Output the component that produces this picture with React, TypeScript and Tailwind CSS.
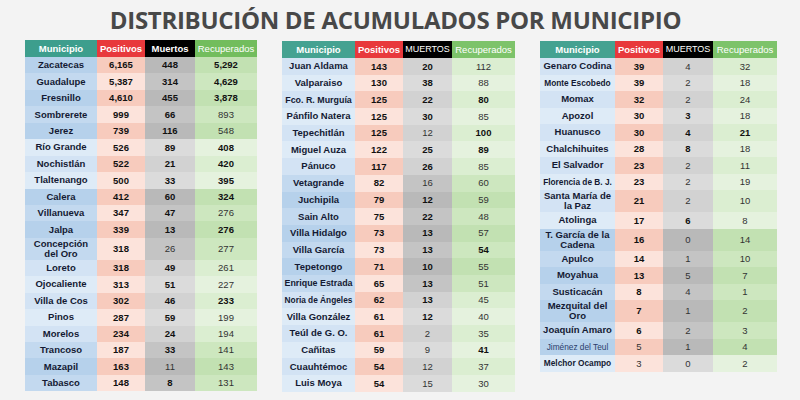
import React from 'react';

type Row = {
  name: string;
  pos: string;
  m: string;
  r: string;
  b: string; // bold mask for pos / muertos / recuperados
  dark: boolean;
  size?: 'sm' | 'md';
  thin?: boolean;
  tall?: boolean;
};

const r = (name: string, pos: string, m: string, rec: string, b: string, dark: boolean, extra: Partial<Row> = {}): Row => ({
  name, pos, m, r: rec, b, dark, ...extra,
});

const left: Row[] = [
  r('Zacatecas', '6,165', '448', '5,292', 'bbb', true),
  r('Guadalupe', '5,387', '314', '4,629', 'bbb', true),
  r('Fresnillo', '4,610', '455', '3,878', 'bbb', true),
  r('Sombrerete', '999', '66', '893', 'bbr', true),
  r('Jerez', '739', '116', '548', 'bbr', true),
  r('Río Grande', '526', '89', '408', 'bbb', false),
  r('Nochistlán', '522', '21', '420', 'bbb', false),
  r('Tlaltenango', '500', '33', '395', 'bbb', false),
  r('Calera', '412', '60', '324', 'bbb', true),
  r('Villanueva', '347', '47', '276', 'bbr', true),
  r('Jalpa', '339', '13', '276', 'bbb', true),
  r('Concepción del Oro', '318', '26', '277', 'brr', true, { tall: true }),
  r('Loreto', '318', '49', '261', 'bbr', false),
  r('Ojocaliente', '313', '51', '227', 'bbr', false),
  r('Villa de Cos', '302', '46', '233', 'bbb', false),
  r('Pinos', '287', '59', '199', 'bbr', false),
  r('Morelos', '234', '24', '194', 'bbr', false),
  r('Trancoso', '187', '33', '141', 'bbr', true),
  r('Mazapil', '163', '11', '143', 'brr', true),
  r('Tabasco', '148', '8', '131', 'bbr', true),
];

const middle: Row[] = [
  r('Juan Aldama', '143', '20', '112', 'bbr', false),
  r('Valparaiso', '130', '38', '88', 'bbr', false),
  r('Fco. R. Murguía', '125', '22', '80', 'bbb', false, { size: 'md' }),
  r('Pánfilo Natera', '125', '30', '85', 'bbr', false),
  r('Tepechitlán', '125', '12', '100', 'brb', false),
  r('Miguel Auza', '122', '25', '89', 'bbb', false),
  r('Pánuco', '117', '26', '85', 'bbr', false),
  r('Vetagrande', '82', '16', '60', 'brr', true),
  r('Juchipila', '79', '12', '59', 'bbr', true),
  r('Sain Alto', '75', '22', '48', 'bbr', true),
  r('Villa Hidalgo', '73', '13', '57', 'bbr', true),
  r('Villa García', '73', '13', '54', 'bbb', true),
  r('Tepetongo', '71', '10', '55', 'bbr', true),
  r('Enrique Estrada', '65', '13', '51', 'bbr', true, { size: 'md' }),
  r('Noria de Ángeles', '62', '13', '45', 'bbr', false, { size: 'sm' }),
  r('Villa González', '61', '12', '40', 'bbr', false),
  r('Teúl de G. O.', '61', '2', '35', 'brr', false),
  r('Cañitas', '59', '9', '41', 'brb', false),
  r('Cuauhtémoc', '54', '12', '37', 'brr', false),
  r('Luis Moya', '54', '15', '30', 'brr', false),
];

const right: Row[] = [
  r('Genaro Codina', '39', '4', '32', 'brr', false),
  r('Monte Escobedo', '39', '2', '18', 'brr', false, { size: 'sm' }),
  r('Momax', '32', '2', '24', 'brr', false),
  r('Apozol', '30', '3', '18', 'bbr', false),
  r('Huanusco', '30', '4', '21', 'bbb', false),
  r('Chalchihuites', '28', '8', '18', 'bbr', false),
  r('El Salvador', '23', '2', '11', 'brr', false),
  r('Florencia de B. J.', '23', '2', '19', 'brr', false, { size: 'sm' }),
  r('Santa María de la Paz', '21', '2', '10', 'brr', false, { tall: true }),
  r('Atolinga', '17', '6', '8', 'bbr', false),
  r('T. García de la Cadena', '16', '0', '14', 'brr', true, { tall: true }),
  r('Apulco', '14', '1', '10', 'brr', true),
  r('Moyahua', '13', '5', '7', 'brr', true),
  r('Susticacán', '8', '4', '1', 'brr', true),
  r('Mezquital del Oro', '7', '1', '2', 'brr', true, { tall: true }),
  r('Joaquín Amaro', '6', '2', '3', 'brr', true),
  r('Jiménez del Teul', '5', '1', '4', 'rrr', true, { size: 'sm', thin: true }),
  r('Melchor Ocampo', '3', '0', '2', 'rrr', false, { size: 'sm' }),
];

const font = { fontFamily: '"Liberation Sans", Arial, sans-serif' };

function Table({ rows, muertos, widths, rowH, tallH, teal, green }: {
  rows: Row[];
  muertos: string;
  widths: [string, string, string, string];
  rowH: string;
  tallH: string;
  teal: string;
  green: string;
}) {
  const [w1, w2, w3, w4] = widths;
  const caps = muertos === 'MUERTOS';
  return (
    <div className="flex flex-col text-[9.5px] leading-none" style={font}>
      <div className="flex h-[17px] text-white">
        <div className={`${w1} ${teal} flex items-center justify-center font-semibold`}>Municipio</div>
        <div className={`${w2} bg-[#e8393c] flex items-center justify-center font-bold`}>Positivos</div>
        <div className={`${w3} bg-black flex items-center justify-center ${caps ? 'font-normal text-[9px]' : 'font-bold'}`}>{muertos}</div>
        <div className={`${w4} ${green} flex items-center justify-center`}>Recuperados</div>
      </div>
      {rows.map((row, i) => {
        const even = i % 2 === 0;
        const blue = row.dark ? (even ? 'bg-[#b6d1eb]' : 'bg-[#c3d9ef]') : (even ? 'bg-[#d3e3f4]' : 'bg-[#deebf7]');
        const pink = even ? 'bg-[#f7cbbd]' : 'bg-[#fce3db]';
        const gray = row.dark ? (even ? 'bg-[#b9b9b9]' : 'bg-[#c4c4c4]') : (even ? 'bg-[#d2d2d2]' : 'bg-[#dbdbdb]');
        const greenBg = row.dark ? (even ? 'bg-[#c2e1b2]' : 'bg-[#cde7bf]') : (even ? 'bg-[#dbeed1]' : 'bg-[#e5f2de]');
        const w = (k: number) => (row.b[k] === 'b' ? 'font-bold text-[#111]' : 'font-normal text-[#333]');
        const size = row.size === 'sm' ? 'text-[8.3px]' : row.size === 'md' ? 'text-[8.9px]' : '';
        return (
          <div key={row.name} className={`flex ${row.tall ? tallH : rowH}`}>
            <div className={`${w1} ${blue} flex items-center justify-center text-center px-0.5 leading-[10px] ${row.tall ? '' : 'whitespace-nowrap'} ${row.thin ? 'font-normal text-[#2b3d6b]' : 'font-bold text-[#141a33]'} ${size}`}>
              {row.name}
            </div>
            <div className={`${w2} ${pink} flex items-center justify-center ${w(0)}`}>{row.pos}</div>
            <div className={`${w3} ${gray} flex items-center justify-center ${w(1)}`}>{row.m}</div>
            <div className={`${w4} ${greenBg} flex items-center justify-center ${w(2)}`}>{row.r}</div>
          </div>
        );
      })}
    </div>
  );
}

export default function App() {
  return (
    <div className="w-[800px] h-[400px] overflow-hidden bg-[#f3f3f3] relative">
      <div className="flex h-[40px] items-center justify-center pr-[9px]">
        <h1
          className="text-[24px] font-bold text-[#484848] tracking-[-0.3px]"
          style={{ fontFamily: '"Open Sans", "Liberation Sans", sans-serif' }}
        >
          DISTRIBUCIÓN DE ACUMULADOS POR MUNICIPIO
        </h1>
      </div>
      <div className="flex items-start pl-[25px] gap-[25px]">
        <Table rows={left} muertos="Muertos" teal="bg-[#3d9e8d]" green="bg-[#72bd5d]" widths={['w-[72px]', 'w-[48px]', 'w-[50px]', 'w-[62px]']} rowH="h-[16.45px]" tallH="h-[22px]" />
        <div className="pt-[1px]">
          <Table rows={middle} muertos="MUERTOS" teal="bg-[#45a291]" green="bg-[#7dc36a]" widths={['w-[73px]', 'w-[48px]', 'w-[49px]', 'w-[63px]']} rowH="h-[16.7px]" tallH="h-[22px]" />
        </div>
        <div className="pt-[1px]">
          <Table rows={right} muertos="MUERTOS" teal="bg-[#45a291]" green="bg-[#7dc36a]" widths={['w-[75px]', 'w-[48px]', 'w-[50px]', 'w-[64px]']} rowH="h-[16.5px]" tallH="h-[22px]" />
        </div>
      </div>
    </div>
  );
}
